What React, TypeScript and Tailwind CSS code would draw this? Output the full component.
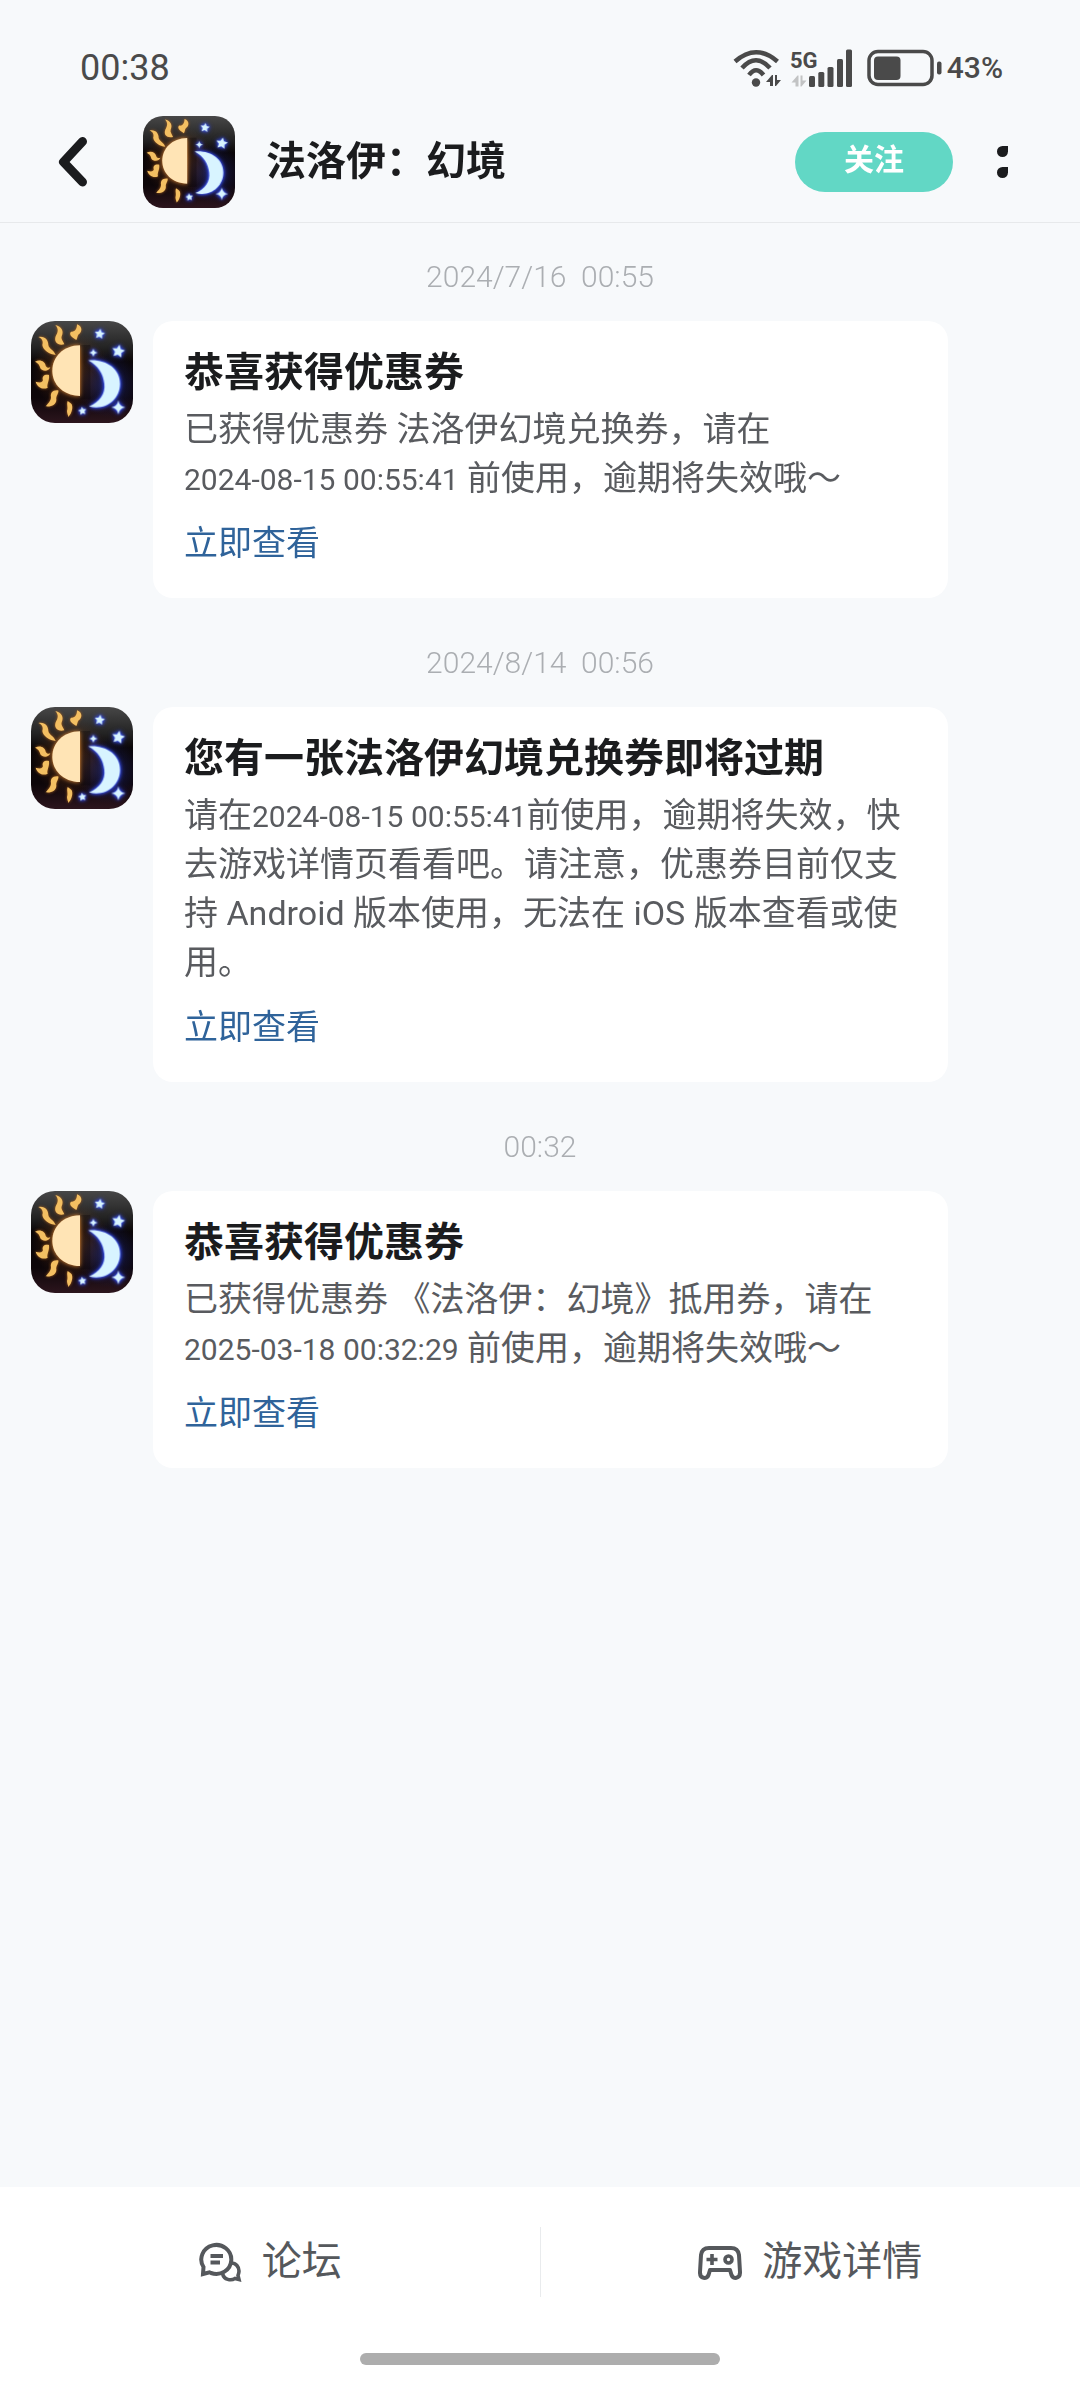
import React from "react";

type Message = {
    id: number;
    time: string;
    title: string;
    body: React.ReactNode;
};

const DateText = ({ children }: { children: React.ReactNode }) => (
    <span className="whitespace-nowrap text-[30px] leading-none">{children}</span>
);

const messages: Message[] = [
    {
        id: 1,
        time: "2024/7/16  00:55",
        title: "恭喜获得优惠券",
        body: (
            <>
                已获得优惠券 法洛伊幻境兑换券，请在 <DateText>2024-08-15 00:55:41</DateText> 前使用，逾期将失效哦～
            </>
        ),
    },
    {
        id: 2,
        time: "2024/8/14  00:56",
        title: "您有一张法洛伊幻境兑换券即将过期",
        body: (
            <>
                请在<DateText>2024-08-15 00:55:41</DateText>前使用，逾期将失效，快去游戏详情页看看吧。请注意，优惠券目前仅支持 Android 版本使用，无法在 iOS 版本查看或使用。
            </>
        ),
    },
    {
        id: 3,
        time: "00:32",
        title: "恭喜获得优惠券",
        body: (
            <>
                已获得优惠券 《法洛伊：幻境》抵用券，请在 <DateText>2025-03-18 00:32:29</DateText> 前使用，逾期将失效哦～
            </>
        ),
    },
];

const STAR = "M0 -1 L0.29 -0.4 L0.95 -0.31 L0.47 0.15 L0.59 0.81 L0 0.5 L-0.59 0.81 L-0.47 0.15 L-0.95 -0.31 L-0.29 -0.4 Z";
const SPARK = "M0 -1 Q0.12 -0.12 1 0 Q0.12 0.12 0 1 Q-0.12 0.12 -1 0 Q-0.12 -0.12 0 -1 Z";

function GameLogo({ className }: { className: string }) {
    return (
        <svg viewBox="0 0 306 306" className={className} role="img" aria-label="法洛伊：幻境">
            <defs>
                <linearGradient id="logoBg" x1="0" y1="0" x2="0" y2="1">
                    <stop offset="0" stopColor="#474747" />
                    <stop offset="0.26" stopColor="#232323" />
                    <stop offset="0.4" stopColor="#0a0607" />
                    <stop offset="0.75" stopColor="#0d0609" />
                    <stop offset="1" stopColor="#2c151d" />
                </linearGradient>
                <radialGradient id="sunGlow">
                    <stop offset="0" stopColor="#a4602a" stopOpacity="0.7" />
                    <stop offset="1" stopColor="#5a2c10" stopOpacity="0" />
                </radialGradient>
                <radialGradient id="moonGlow">
                    <stop offset="0" stopColor="#2737a0" stopOpacity="0.6" />
                    <stop offset="1" stopColor="#151c60" stopOpacity="0" />
                </radialGradient>
            </defs>
            <rect width="306" height="306" fill="url(#logoBg)" />
            <circle cx="120" cy="150" r="118" fill="url(#sunGlow)" />
            <circle cx="232" cy="190" r="100" fill="url(#moonGlow)" />
            <path d="M149 72 H178 V235 H149 Z" fill="#080405" opacity="0.3" />
            <g fill="#f3bf62" className="[filter:drop-shadow(0_0_5px_#a85f1c)]">
                <path d="M73 12 C93 16 99 32 92 46 C89 54 97 62 100 70 C80 74 68 64 74 46 C81 34 84 24 73 12 Z" />
                <path d="M138 10 C156 16 153 34 143 40 C138 46 140 52 136 57 C124 50 112 42 120 32 C132 34 138 24 138 10 Z" />
                <path d="M22 48 C42 44 52 58 52 72 C54 84 70 88 74 102 C56 100 36 88 34 72 C38 60 32 52 22 48 Z" />
                <path d="M12 122 C28 114 42 122 44 134 C48 142 54 140 58 139 C54 152 34 152 28 142 C26 130 20 126 12 122 Z" />
                <path d="M54 162 C40 160 32 166 36 178 C32 188 22 184 14 182 C18 198 36 208 50 200 C46 190 56 180 54 162 Z" />
                <path d="M82 208 C64 206 58 216 60 228 C60 240 52 246 44 256 C62 258 76 250 76 236 C74 224 84 218 82 208 Z" />
                <path d="M110 240 C106 250 112 258 108 270 C108 278 112 284 112 288 C124 276 126 258 122 250 C118 244 114 244 110 240 Z" />
            </g>
            <path
                d="M147 73 C96 74 64 108 64 149 C64 190 96 224 147 225 Z"
                fill="#ffe4b5"
                className="[filter:drop-shadow(0_0_7px_#e08a35)]"
            />
            <g fill="#d8f4ff" className="[filter:drop-shadow(0_0_5px_#3f5cff)_drop-shadow(0_0_7px_#2c3fe0)]">
                <path d="M172 118 C224 114 267 142 267 188 C267 236 222 270 174 256 C206 244 224 218 220 188 C217 158 202 134 172 118 Z" />
                <path d={STAR} transform="translate(206 39) rotate(8) scale(16)" />
                <path d={STAR} transform="translate(262 91) rotate(10) scale(20)" />
                <path d={STAR} transform="translate(154 270) rotate(-8) scale(13)" />
                <path d={SPARK} transform="translate(187 95) scale(13)" />
                <path d={SPARK} transform="translate(262 259) scale(21)" />
            </g>
        </svg>
    );
}

// two small arrows, up and down, next to the wifi and mobile signals
const TRAFFIC = "M0 7 L6 0 H7 V11 H4 V7 Z M9 0 H11 V5 H15 L10 11 H9 Z";

function StatusIcons() {
    return (
        <svg viewBox="734 46 210 42" className="h-[42px] w-[210px]" fill="#4a4a4a" aria-hidden="true">
            <g fill="none" stroke="#4a4a4a" strokeWidth="4.5">
                <path d="M736 60.5 Q757 42 778.5 60.5" />
                <path d="M743 67 Q757 51.5 771 67" />
                <path d="M750 74 Q757 64.5 764.5 74" />
            </g>
            <circle cx="757" cy="81.5" r="4.2" />
            <path d={TRAFFIC} transform="translate(767 74)" />
            <text x="791" y="67" fontSize="22" fontWeight="700">
                5G
            </text>
            <path d={TRAFFIC} transform="translate(792.5 74.5)" fill="#c2c3c4" />
            <rect x="810" y="75" width="6" height="11" rx="1.5" />
            <rect x="819.3" y="71" width="6" height="15" rx="1.5" />
            <rect x="828.5" y="66" width="6" height="20" rx="1.5" />
            <rect x="838" y="58" width="6" height="28" rx="1.5" />
            <rect x="847" y="48.5" width="6" height="37.5" rx="1.5" />
            <rect x="870" y="50.5" width="63" height="33" rx="9" fill="none" stroke="#4a4a4a" strokeWidth="3.5" />
            <rect x="875" y="55.5" width="26.5" height="23.5" rx="4" />
            <rect x="938" y="60.5" width="4.5" height="13" rx="2" />
        </svg>
    );
}

function ForumIcon() {
    return (
        <svg viewBox="0 0 44 44" className="h-11 w-11" fill="none" stroke="#55585c" strokeWidth="4" aria-hidden="true">
            <path d="M5 34 L5.5 27 A15 14.5 0 1 1 13 33 L11.5 32.3 Z" />
            <path d="M12.5 16 H25 M12.5 22.5 H22" />
            <path d="M33.5 23 C38 23 41 27 41 31 C41 33 40 35.5 40 35.5 L41 39.5 L37 38.5 C33 41 26 40 24.5 33.5" strokeWidth="3.6" />
        </svg>
    );
}

function GamepadIcon() {
    return (
        <svg viewBox="0 0 44 44" className="h-11 w-11" fill="none" stroke="#55585c" strokeWidth="4" aria-hidden="true">
            <path
                d="M11 8 H33 C38 8 40.5 11 41 15 L42 32 C42.3 39 35 39.5 33.5 35 L32 30 H12 L10.5 35 C9 39.5 1.7 39 2 32 L3 15 C3.5 11 6 8 11 8 Z"
                strokeLinejoin="round"
            />
            <path d="M14 14 V25 M8.5 19.5 H19.5" strokeWidth="3.6" />
            <circle cx="30.5" cy="19.5" r="3.5" strokeWidth="3.6" />
        </svg>
    );
}

function MessageItem({ message }: { message: Message }) {
    return (
        <li>
            <p className="whitespace-pre text-center text-[30px] leading-10 font-light text-[#abaeb2]">{message.time}</p>
            <div className="mt-6 mr-[101px] flex items-start gap-5">
                <GameLogo className="size-[102px] shrink-0 rounded-3xl" />
                <article className="flex-1 rounded-[20px] bg-white px-[31px] pt-6 pb-[30px]">
                    <h2 className="text-[40px] leading-[56px] font-bold text-[#1b1c1e]">{message.title}</h2>
                    <p className="mt-1 text-[34px] leading-[49px] text-[#595b5f]">{message.body}</p>
                    <a href="#detail" className="mt-4 block w-fit text-[34px] leading-[49px] text-[#2f639a]">
                        立即查看
                    </a>
                </article>
            </div>
        </li>
    );
}

export default function App() {
    return (
        <div
            lang="zh-CN"
            className="flex min-h-screen flex-col bg-[#f7f9fb] font-['Roboto','Noto_Sans_CJK_SC',sans-serif]"
        >
            <div className="flex items-center justify-between pt-[47px] pr-[77px] pb-[13px] pl-20 text-[#4a4a4a]">
                <span className="text-[36px] leading-10">00:38</span>
                <div className="flex items-center gap-1">
                    <StatusIcons />
                    <span className="text-[30px] leading-10 font-medium">43%</span>
                </div>
            </div>

            <header className="flex items-center border-b border-[#e7e9eb] py-[14px] pr-[72px] pl-[58px]">
                <button type="button" aria-label="返回" className="mr-[55px]">
                    <svg viewBox="0 0 30 52" className="h-[52px] w-[30px]" fill="none" stroke="#1b1c1e" strokeWidth="9" strokeLinecap="round" strokeLinejoin="round">
                        <path d="M24.5 5.5 L5.5 26 L24.5 46" />
                    </svg>
                </button>
                <GameLogo className="size-[92px] rounded-[20px]" />
                <h1 className="ml-[31px] flex-1 text-[40px] leading-[56px] font-bold text-[#1b1c1e]">法洛伊：幻境</h1>
                <button type="button" className="rounded-full bg-[#62d7c5] px-[49px] pt-2 pb-3 text-[30px] leading-10 font-bold text-white">
                    关注
                </button>
                <button type="button" aria-label="更多" className="ml-11 flex flex-col gap-[10px]">
                    <span className="size-[11px] rounded-full rounded-tr-[2px] bg-[#1b1c1e]" />
                    <span className="size-[11px] rounded-full rounded-tr-[2px] bg-[#1b1c1e]" />
                </button>
            </header>

            <main className="flex-1 px-[31px] pt-[34px] pb-10">
                <ul className="flex flex-col gap-[45px]">
                    {messages.map((message) => (
                        <MessageItem key={message.id} message={message} />
                    ))}
                </ul>
            </main>

            <footer className="bg-white pt-10 pb-[27px]">
                <nav className="flex divide-x divide-[#e9ebed] text-[40px] leading-[70px] text-[#55585c]">
                    <a href="#forum" className="flex flex-1 items-center justify-center gap-5">
                        <ForumIcon />
                        论坛
                    </a>
                    <a href="#game" className="flex flex-1 items-center justify-center gap-5">
                        <GamepadIcon />
                        游戏详情
                    </a>
                </nav>
                <div className="mx-auto mt-14 h-3 w-1/3 rounded-full bg-[#adadad]" />
            </footer>
        </div>
    );
}
